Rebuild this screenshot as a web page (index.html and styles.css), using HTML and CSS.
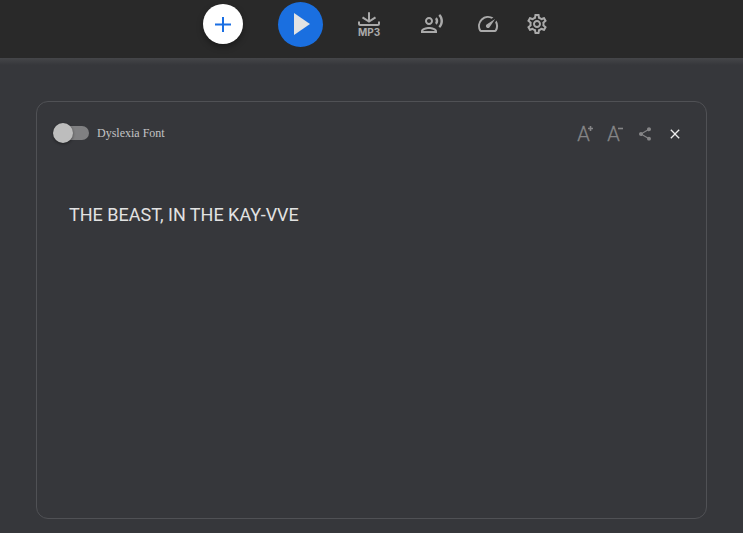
FILE: index.html
```html
<!DOCTYPE html>
<html lang="en">
<head>
<meta charset="utf-8">
<title>Reader</title>
<link rel="stylesheet" href="styles.css">
</head>
<body>
<header class="toolbar">
  <button class="btn add" aria-label="Add"><svg width="16" height="16" viewBox="0 0 16 16"><path d="M8 1v15M0 8.500h16"/></svg></button>
  <button class="btn play" aria-label="Play"><svg width="16" height="22" viewBox="0 0 16 22"><path d="M0 0v22l16-11z"/></svg></button>
  <button class="btn mp3" aria-label="Download"><svg width="22" height="14" viewBox="0 0 22 14"><path d="M11 .3v9M4.500 5.300L11 9.600l6.500-4.300M1 9.500v2q0 1.500 1.500 1.500h17q1.500 0 1.500-1.500v-2"/></svg><span>MP3</span></button>
  <button class="btn voice" aria-label="Voice"><svg width="24" height="24" viewBox="0 0 24 24"><path d="M9 13c2.210 0 4-1.790 4-4s-1.790-4-4-4-4 1.790-4 4 1.790 4 4 4zm0-6c1.100 0 2 .9 2 2s-.9 2-2 2-2-.9-2-2 .9-2 2-2zm0 8c-2.670 0-8 1.340-8 4v2h16v-2c0-2.660-5.330-4-8-4zm-6 4c.22-.72 3.310-2 6-2 2.700 0 5.800 1.290 6 2H3zM15.080 7.050c.84 1.180.84 2.710 0 3.890l1.680 1.690c2.020-2.020 2.020-5.070 0-7.270l-1.680 1.690zM20.070 2l-1.630 1.630c2.770 3.020 2.770 7.560 0 10.740L20.070 16c3.900-3.890 3.910-9.950 0-14z"/></svg></button>
  <button class="btn speed" aria-label="Speed"><svg width="24" height="24" viewBox="0 0 24 24"><path d="M20.380 8.570l-1.230 1.850a8 8 0 0 1-.22 7.580H5.070A8 8 0 0 1 15.580 6.850l1.850-1.230A10 10 0 0 0 3.350 19a2 2 0 0 0 1.720 1h13.850a2 2 0 0 0 1.740-1 10 10 0 0 0-.27-10.440zM10.590 15.410a2 2 0 0 0 2.830 0l5.660-8.490-8.490 5.660a2 2 0 0 0 0 2.830z"/></svg></button>
  <button class="btn settings" aria-label="Settings"><svg width="24" height="24" viewBox="0 0 24 24"><path d="M19.430 12.980c.04-.32.07-.64.07-.98 0-.34-.03-.66-.07-.98l2.110-1.650c.19-.15.24-.42.12-.64l-2-3.460c-.09-.16-.26-.25-.44-.25-.06 0-.12.01-.17.03l-2.490 1c-.52-.4-1.080-.73-1.690-.98l-.38-2.650C14.460 2.180 14.250 2 14 2h-4c-.25 0-.46.18-.49.42l-.38 2.650c-.61.25-1.170.59-1.690.98l-2.490-1c-.06-.02-.12-.03-.18-.03-.17 0-.34.09-.43.25l-2 3.460c-.13.22-.07.49.12.64l2.110 1.650c-.04.32-.07.65-.07.98 0 .33.03.66.07.98l-2.110 1.650c-.19.15-.24.42-.12.64l2 3.460c.09.16.26.25.44.25.06 0 .12-.01.17-.03l2.490-1c.52.4 1.080.73 1.690.98l.38 2.650c.03.24.24.42.49.42h4c.25 0 .46-.18.49-.42l.38-2.650c.61-.25 1.170-.59 1.690-.98l2.490 1c.06.02.12.03.18.03.17 0 .34-.09.43-.25l2-3.460c.12-.22.07-.49-.12-.64l-2.110-1.650zm-1.980-1.710c.04.31.05.52.05.73 0 .21-.02.43-.05.73l-.14 1.130.89.7 1.080.84-.7 1.210-1.270-.51-1.040-.42-.9.68c-.43.32-.84.56-1.250.73l-1.060.43-.16 1.130-.2 1.350h-1.400l-.19-1.350-.16-1.130-1.060-.43c-.43-.18-.83-.41-1.230-.71l-.91-.7-1.060.43-1.270.51-.7-1.210 1.080-.84.89-.7-.14-1.130c-.03-.31-.05-.54-.05-.74s.02-.43.05-.73l.14-1.130-.89-.7-1.080-.84.7-1.210 1.270.51 1.040.42.9-.68c.43-.32.84-.56 1.250-.73l1.060-.43.16-1.130.2-1.350h1.390l.19 1.350.16 1.130 1.060.43c.43.18.83.41 1.230.71l.91.7 1.060-.43 1.270-.51.7 1.210-1.070.85-.89.7.14 1.130zM12 8c-2.210 0-4 1.790-4 4s1.790 4 4 4 4-1.790 4-4-1.790-4-4-4zm0 6c-1.100 0-2-.9-2-2s.9-2 2-2 2 .9 2 2-.9 2-2 2z"/></svg></button>
</header>
<main class="page">
  <section class="card">
    <div class="card-head">
      <span class="switch"><span class="track"></span><span class="thumb"></span></span>
      <span class="label">Dyslexia Font</span>
      <div class="actions">
        <button class="btn size" aria-label="Larger text"><span>A</span><svg width="5" height="5" viewBox="0 0 5 5"><path d="M2.500 0v5M0 2.500h5"/></svg></button>
        <button class="btn size" aria-label="Smaller text"><span>A</span><svg width="5" height="5" viewBox="0 0 5 5"><path d="M0 2.500h5"/></svg></button>
        <button class="btn share" aria-label="Share"><svg width="16" height="16" viewBox="0 0 24 24"><path d="M18 16.080c-.76 0-1.440.3-1.960.77L8.910 12.700c.05-.23.09-.46.09-.7s-.04-.47-.09-.7l7.050-4.110c.54.5 1.250.81 2.040.81 1.660 0 3-1.340 3-3s-1.340-3-3-3-3 1.340-3 3c0 .24.04.47.09.7L8.040 9.810C7.500 9.310 6.790 9 6 9c-1.660 0-3 1.340-3 3s1.340 3 3 3c.79 0 1.500-.31 2.040-.81l7.120 4.160c-.05.21-.08.43-.08.65 0 1.610 1.310 2.920 2.920 2.920s2.920-1.310 2.920-2.920-1.310-2.920-2.920-2.920z"/></svg></button>
        <button class="btn close" aria-label="Close"><svg width="16" height="16" viewBox="0 0 24 24"><path d="M19 6.410L17.590 5 12 10.590 6.410 5 5 6.410 10.590 12 5 17.590 6.410 19 12 13.410 17.590 19 19 17.590 13.410 12z"/></svg></button>
      </div>
    </div>
    <p class="text">THE BEAST, IN THE KAY-VVE</p>
  </section>
</main>
</body>
</html>
```

FILE: styles.css
```css
* { box-sizing: border-box; }
body {
  margin: 0;
  height: 533px;
  overflow: hidden;
  background: #36373b;
  font-family: Roboto, sans-serif;
}
.btn {
  display: flex;
  align-items: center;
  justify-content: center;
  flex: none;
  padding: 0;
  border: 0;
  background: none;
  font-family: inherit;
}
svg { display: block; flex: none; fill: currentColor; }
.toolbar {
  display: flex;
  align-items: center;
  height: 58px;
  padding: 0 0 10px 203px;
  background: #292929;
  color: #aaa;
}
.add {
  width: 40px;
  height: 40px;
  margin-right: 34.5px;
  border-radius: 50%;
  background: #fff;
  color: #1a6fe3;
  box-shadow: 0 3px 6px rgba(0, 0, 0, .35);
}
.add svg { fill: none; stroke: currentColor; stroke-width: 2; }
.play {
  width: 45px;
  height: 45px;
  margin-right: 35.5px;
  padding-left: 3px;
  border-radius: 50%;
  background: #1a6fe0;
  color: #e3e3e3;
}
.mp3 {
  flex-direction: column;
  width: 22px;
  height: 24px;
  margin-right: 40px;
  color: #aaa;
}
.mp3 svg { fill: none; stroke: currentColor; stroke-width: 2; }
.mp3 span {
  height: 10px;
  font: 700 10px/12px Inter, sans-serif;
}
.voice { margin-right: 32px; color: #aaa; }
.speed { margin-right: 25px; color: #aaa; }
.settings { color: #aaa; }
.page {
  height: 475px;
  padding: 43px 36px 14px;
  background: linear-gradient(#454649, #36373b 7px);
}
.card {
  height: 418px;
  padding: 19px 23px 0 16px;
  border: 1px solid #505155;
  border-radius: 12px;
}
.card-head { display: flex; align-items: center; height: 24px; }
.switch {
  display: grid;
  align-items: center;
  width: 36px;
}
.track, .thumb { grid-area: 1 / 1; }
.track { height: 14px; margin-left: 3px; border-radius: 7px; background: #808082; }
.thumb {
  width: 20px;
  height: 20px;
  border-radius: 50%;
  background: #bdbdbd;
  box-shadow: 0 1px 3px rgba(0, 0, 0, .45);
}
.label {
  margin-left: 8px;
  font: 12px/14px "Liberation Serif", serif;
  color: #c4c4c6;
}
.actions {
  display: flex;
  align-items: center;
  gap: 14px;
  margin: 1px 0 0 auto;
}
.size { width: 16px; height: 20px; align-items: flex-start; color: #858587; }
.size span {
  font-size: 20px;
  font-weight: 300;
  line-height: 20px;
  -webkit-text-stroke: .3px currentColor;
}
.size svg { margin: 2px 0 0 -2px; fill: none; stroke: currentColor; stroke-width: 1.6; }
.share { color: #858587; }
.close { color: #ececec; }
.text {
  margin: 59px 0 0 16px;
  font-size: 18px;
  line-height: 22px;
  color: #e2e2e2;
}
```
